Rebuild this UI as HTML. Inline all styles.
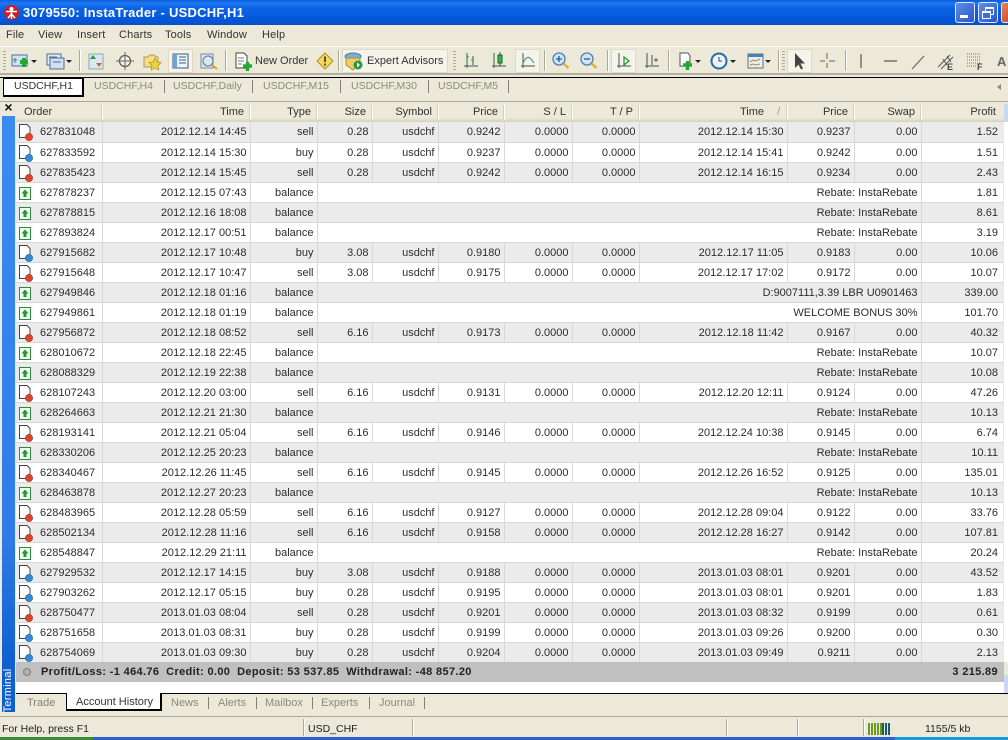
<!DOCTYPE html>
<html><head><meta charset="utf-8"><title>InstaTrader</title>
<style>
*{box-sizing:border-box}
html,body{margin:0;padding:0;width:1008px;height:740px;overflow:hidden;background:#ece9d8;font:11px "Liberation Sans",sans-serif;color:#222}
.a{position:absolute}
#title{left:0;top:0;width:1008px;height:25px;background:linear-gradient(#0a5ad8 0,#1f78f0 3px,#0b63e6 8px,#0558dc 18px,#0650c8 25px)}
#title span{position:absolute;left:23px;top:5px;font:bold 13px "Liberation Sans",sans-serif;color:#fff;letter-spacing:.25px;white-space:nowrap}
.wb{position:absolute;top:2px;width:20px;height:21px;border:1px solid #dfe8fb;border-radius:3px;background:linear-gradient(135deg,#5f8ee8,#2a55c8)}
.mn{position:absolute;top:29px;font-size:11px;letter-spacing:.15px;color:#333}
.tb{position:absolute;white-space:nowrap;font-size:11px;color:#333}
.sep{position:absolute;width:1px;background:#aca899;box-shadow:1px 0 0 #fff}
.pressed{position:absolute;background:#f5f3ea;border:1px solid #dcd9c9}
.htx{position:absolute;top:106px;font-size:11px;color:#333;text-align:right;white-space:nowrap}
.hs{position:absolute;top:105px;height:15px;width:1px;background:#d2cfbe;box-shadow:1px 0 0 #fff}
.tab{position:absolute;font-size:11px;color:#8a8a80;white-space:nowrap}
.ct{font-size:10.5px}
.tick{position:absolute;width:1px;background:#808078}
table{position:absolute;left:16px;top:122px;width:987px;border-collapse:collapse;table-layout:fixed}
td{height:20px;padding:2px 3px 0 0;text-align:right;border-right:1px solid #d8d8d8;border-bottom:1px solid #d8d8d8;font-size:11px;color:#2c2c2c;white-space:nowrap;overflow:hidden;line-height:17px}
tr:nth-child(odd) td{background:#ebebeb}
tr:nth-child(even) td{background:#fff}
td:first-child{text-align:left;padding-left:24px;position:relative}
td:last-child{padding-right:5px;border-right:0}
svg.ic{position:absolute;left:1px;top:1px}
</style></head><body>
<svg width="0" height="0" style="position:absolute"><defs>
<g id="r"><path d="M2.5 1.5H10L13 4.5V14.5H2.5Z" fill="#fff" stroke="#444" stroke-width="1"/><circle cx="12" cy="14" r="3.6" fill="#e0452c" stroke="#9a2a18" stroke-width=".6"/></g>
<g id="b"><path d="M2.5 1.5H10L13 4.5V14.5H2.5Z" fill="#fff" stroke="#444" stroke-width="1"/><circle cx="12" cy="14" r="3.6" fill="#2f8bd8" stroke="#1a5a98" stroke-width=".6"/></g>
<g id="g"><rect x="2.5" y="3.5" width="11" height="12" fill="#f4fbf4" stroke="#2c8a3c"/><path d="M8 5.5L11.5 9.5H9.5V13H6.5V9.5H4.5Z" fill="#1f9a30"/></g>
</defs></svg>

<div class="a" id="title">
<svg class="a" style="left:3px;top:4px" width="17" height="17" viewBox="0 0 17 17"><circle cx="8.500" cy="8.500" r="7.500" fill="#c81f28"/><circle cx="8.500" cy="5" r="2" fill="#fff"/><path d="M3 7.500H14M8.500 7V15M8.500 10L5 14M8.500 10L12 14" stroke="#fff" stroke-width="1.500" fill="none"/></svg>
<span>3079550: InstaTrader - USDCHF,H1</span>
<div class="wb" style="left:955px"><div class="a" style="left:4px;top:12px;width:8px;height:3px;background:#fff"></div></div>
<div class="wb" style="left:978px"><div class="a" style="left:6px;top:4px;width:9px;height:8px;border:1px solid #fff;border-top-width:2px"></div><div class="a" style="left:3px;top:8px;width:9px;height:8px;border:1px solid #fff;border-top-width:2px;background:#3f6cd8"></div></div>
<div class="wb" style="left:1001px;width:20px;background:linear-gradient(135deg,#e8805c,#c8391c)"></div>
</div>

<div class="mn" style="left:6px">File</div><div class="mn" style="left:38px">View</div><div class="mn" style="left:77px">Insert</div><div class="mn" style="left:119px">Charts</div><div class="mn" style="left:165px">Tools</div><div class="mn" style="left:207px">Window</div><div class="mn" style="left:262px">Help</div>

<div class="a" style="left:0;top:46px;width:1008px;height:1px;background:#fff"></div>
<div class="a" style="left:0;top:73px;width:1008px;height:2px;background:#b4b1a2"></div>
<div class="a" style="left:3px;top:51px;width:3px;height:20px;background:repeating-linear-gradient(#aca899 0 1px,transparent 1px 3px)"></div>
<div class="sep" style="left:79px;top:50px;height:21px"></div>
<div class="sep" style="left:225px;top:50px;height:21px"></div>
<div class="sep" style="left:338px;top:50px;height:21px"></div>
<div class="sep" style="left:544px;top:50px;height:21px"></div>
<div class="sep" style="left:607px;top:50px;height:21px"></div>
<div class="sep" style="left:668px;top:50px;height:21px"></div>
<div class="sep" style="left:778px;top:50px;height:21px"></div>
<div class="sep" style="left:845px;top:50px;height:21px"></div>
<div class="a" style="left:453px;top:51px;width:3px;height:20px;background:repeating-linear-gradient(#aca899 0 1px,transparent 1px 3px)"></div>
<div class="a" style="left:782px;top:51px;width:3px;height:20px;background:repeating-linear-gradient(#aca899 0 1px,transparent 1px 3px)"></div>

<div class="pressed" style="left:168px;top:49px;width:25px;height:24px"></div>
<div class="pressed" style="left:342px;top:49px;width:106px;height:24px"></div>
<div class="pressed" style="left:515px;top:49px;width:25px;height:24px"></div>
<div class="pressed" style="left:611px;top:49px;width:25px;height:24px"></div>
<div class="pressed" style="left:787px;top:49px;width:25px;height:24px"></div>

<svg class="a" style="left:0;top:47px" width="1008" height="27" viewBox="0 47 1008 27">
<rect x="12" y="55" width="15" height="11" fill="#cfe2f6" stroke="#50708c"/><path d="M15 58v5M13 60h4" stroke="#50708c"/><path d="M20 62h8M24 58v9" stroke="#24a832" stroke-width="4"/>
<path d="M31 60h6l-3 3z" fill="#222"/>
<rect x="47" y="54" width="14" height="11" fill="#dfe9f5" stroke="#50708c"/><rect x="50" y="58" width="14" height="11" fill="#cfe0f2" stroke="#50708c"/><path d="M49 57h8M53 62h8" stroke="#50708c"/>
<path d="M66 60h6l-3 3z" fill="#222"/>
<rect x="89" y="54" width="14" height="15" fill="#d8e8f5" stroke="#8aa"/><path d="M93 55l3 4h-6z" fill="#2a9a3a"/><path d="M99 67l3-4h-6z" fill="#d8642c"/>
<circle cx="125" cy="61" r="5.500" fill="#f5f0e0" stroke="#555" stroke-width="1.200"/><path d="M125 52v18M116 61h18" stroke="#666"/>
<path d="M144 57h4l2-2h4l2 2h2v10h-14z" fill="#f5dc88" stroke="#b09a50"/><path d="M155 58l2 4 4 .6-3 3 .8 4.400-3.800-2-3.800 2 .8-4.400-3-3 4-.6z" fill="#f2d23c" stroke="#a89020" stroke-width=".7"/>
<rect x="173" y="54" width="15" height="14" fill="#eef4fb" stroke="#3a5a80"/><rect x="173" y="54" width="4" height="14" fill="#6aa4d8"/><path d="M179 57h7M179 60h7M179 63h7" stroke="#3a5a80"/>
<rect x="201" y="54" width="12" height="14" fill="#dbe5f0" stroke="#7a8ca0"/><circle cx="208" cy="61" r="5" fill="#dce8f2" stroke="#607890"/><path d="M212 65l5 4" stroke="#d8a030" stroke-width="2"/>
<path d="M236 53h8l3 3v12h-11z" fill="#fff" stroke="#444"/><path d="M238 58h6M238 61h6M238 64h4" stroke="#777"/><path d="M243 66h9M247.500 62v9" stroke="#24a832" stroke-width="3.500"/>
<path d="M325 53l8 8-8 8-8-8z" fill="#f5d858" stroke="#a89028"/><path d="M325 56.500v5.500M325 63.500v2" stroke="#222" stroke-width="1.500"/>
<ellipse cx="353" cy="56.500" rx="8" ry="3.500" fill="#7ab0d8" stroke="#4a7aa0"/><path d="M346 58h14v6l-7 6-7-5z" fill="#f0cc68" stroke="#a89040"/><circle cx="358" cy="65" r="4.500" fill="#2a9a40"/><path d="M357 62.500l3 2.500-3 2.500z" fill="#fff"/>
<path d="M467 53v15M464 66h14M473 56v9" stroke="#3a5a50" fill="none"/><path d="M467 57h2M473 60h-2" stroke="#2a9a3a"/>
<path d="M494 53v15M492 66h14" stroke="#3a5a50"/><path d="M500 52v14" stroke="#444"/><rect x="498" y="55" width="4" height="8" fill="#30c030" stroke="#254"/>
<path d="M523 53v15M521 66h14" stroke="#3a5a50"/><path d="M523 63c4-9 7-6 11 0" stroke="#3a8a70" fill="none"/>
<circle cx="559" cy="59" r="6" fill="#cfe4f6" stroke="#4a80b0" stroke-width="1.300"/><path d="M556 59h6M559 56v6" stroke="#2a5a90" stroke-width="1.300"/><path d="M563.500 63.500l5 4.500" stroke="#d8b040" stroke-width="2.500"/>
<circle cx="587" cy="59" r="6" fill="#cfe4f6" stroke="#4a80b0" stroke-width="1.300"/><path d="M584 59h6" stroke="#2a5a90" stroke-width="1.300"/><path d="M591.500 63.500l5 4.500" stroke="#d8b040" stroke-width="2.500"/>
<path d="M619 53v15M617 66h14" stroke="#3a5a50"/><path d="M624 57l5 4-5 4z" fill="none" stroke="#2a9a3a" stroke-width="1.300"/>
<path d="M647 53v15M645 66h14M652 55v10" stroke="#3a5a50"/><path d="M654 60h4M656 58v4" stroke="#555"/>
<path d="M680 53h8l2 3v10h-10z" fill="#fff" stroke="#555"/><path d="M683 65h9M687.500 61v9" stroke="#24a832" stroke-width="3.500"/><path d="M695 60h6l-3 3z" fill="#222"/>
<circle cx="719" cy="61" r="7.500" fill="#eaf2fa" stroke="#2a6aa8" stroke-width="2"/><path d="M719 57v4h3" stroke="#444" fill="none"/><path d="M730 60h6l-3 3z" fill="#222"/>
<rect x="748" y="54" width="15" height="14" fill="#e8eef4" stroke="#5a7488"/><rect x="748" y="54" width="15" height="3" fill="#4a80b8"/><path d="M750 62l3-2 3 1 4-2M750 65l3-1 3 1 4-1" stroke="#c08030" fill="none"/><path d="M765 60h6l-3 3z" fill="#222"/>
<path d="M795 53v15l3.500-3.500 2.500 5 2-1-2.500-5h4.500z" fill="#444"/>
<path d="M827 53v15M820 61h15" stroke="#666"/><path d="M827 59v4M825 61h4" stroke="#ece9d8" stroke-width="1.500"/>
<path d="M861 54v14" stroke="#555" stroke-width="1.200"/>
<path d="M884 61h13" stroke="#555" stroke-width="1.200"/>
<path d="M912 69l12-13" stroke="#666" stroke-width="1.200"/>
<path d="M938 67l12-12M941 69l12-12M943 59l4 6M947 56l4 6" stroke="#555" fill="none"/>
<path d="M967 54h14M967 57h14M967 60h14M967 63h14M967 66h10" stroke="#777" stroke-dasharray="1 1"/>
</svg>
<div class="a" style="left:947px;top:62px;font-size:9px;font-weight:bold;color:#444">E</div>
<div class="a" style="left:977px;top:62px;font-size:9px;font-weight:bold;color:#444">F</div>
<div class="a" style="left:997px;top:54px;font-size:13px;font-weight:bold;color:#666">A</div>
<div class="tb" style="left:255px;top:55px">New Order</div>
<div class="tb" style="left:367px;top:55px">Expert Advisors</div>

<div class="a" style="left:0;top:77px;width:1008px;height:1px;background:#000"></div>
<div class="a" style="left:3px;top:77px;width:81px;height:20px;background:#fff;border:1px solid #000;border-top:2px solid #000;border-bottom:2px solid #000;border-right:2px solid #000"></div>
<div class="tab ct" style="left:14px;top:80px;color:#333">USDCHF,H1</div>
<div class="tab ct" style="left:94px;top:80px">USDCHF,H4</div><div class="tick" style="left:164px;top:80px;height:13px"></div>
<div class="tab ct" style="left:173px;top:80px">USDCHF,Daily</div><div class="tick" style="left:252px;top:80px;height:13px"></div>
<div class="tab ct" style="left:263px;top:80px">USDCHF,M15</div><div class="tick" style="left:340px;top:80px;height:13px"></div>
<div class="tab ct" style="left:351px;top:80px">USDCHF,M30</div><div class="tick" style="left:428px;top:80px;height:13px"></div>
<div class="tab ct" style="left:438px;top:80px">USDCHF,M5</div><div class="tick" style="left:508px;top:80px;height:13px"></div>
<div class="a" style="left:997px;top:84px;width:0;height:0;border:3px solid transparent;border-right:4px solid #888;border-left:0"></div>
<div class="a" style="left:0;top:101px;width:1008px;height:1px;background:#aca899"></div>

<div class="a" style="left:2px;top:116px;width:13px;height:596px;background:linear-gradient(#3b8bf0 0,#2f7ce8 70%,#0f5fd0 92%,#0f5fd0 100%)"></div>
<div class="a" style="left:2px;top:102px;width:13px;height:14px;background:#ece9d8;font:bold 14px 'Liberation Sans',sans-serif;text-align:center;line-height:11px;color:#111">×</div>
<div class="a" style="left:-15px;top:684px;width:47px;height:13px;transform:rotate(-90deg);font-size:11px;line-height:13px;color:#fff;text-align:center;letter-spacing:.3px">Terminal</div>

<div class="a" style="left:16px;top:102px;width:992px;height:20px;background:linear-gradient(#ece9d8 0,#ece9d8 16px,#d8d5c6 19px)"></div>
<div class="htx" style="left:24px">Order</div>
<div class="htx" style="right:764px">Time</div>
<div class="htx" style="right:697px">Type</div>
<div class="htx" style="right:642px">Size</div>
<div class="htx" style="right:576px">Symbol</div>
<div class="htx" style="right:510px">Price</div>
<div class="htx" style="right:442px">S / L</div>
<div class="htx" style="right:375px">T / P</div>
<div class="htx" style="right:244px">Time</div>
<div class="a" style="left:777px;top:106px;font-size:11px;color:#999">/</div>
<div class="htx" style="right:160px">Price</div>
<div class="htx" style="right:93px">Swap</div>
<div class="htx" style="right:12px">Profit</div>
<div class="hs" style="left:101px"></div><div class="hs" style="left:249px"></div><div class="hs" style="left:316px"></div><div class="hs" style="left:371px"></div><div class="hs" style="left:437px"></div><div class="hs" style="left:503px"></div><div class="hs" style="left:571px"></div><div class="hs" style="left:638px"></div><div class="hs" style="left:786px"></div><div class="hs" style="left:853px"></div><div class="hs" style="left:920px"></div>
<div class="a" style="left:1004px;top:104px;width:4px;height:17px;background:#c8d8f4"></div>
<div class="a" style="left:1004px;top:122px;width:4px;height:540px;background:#fff"></div>

<table>
<colgroup><col style="width:86px"><col style="width:148px"><col style="width:67px"><col style="width:55px"><col style="width:66px"><col style="width:66px"><col style="width:68px"><col style="width:67px"><col style="width:148px"><col style="width:67px"><col style="width:67px"><col style="width:82px"></colgroup>
<tbody>
<tr><td><svg class="ic" width="18" height="18"><use href="#r"/></svg>627831048</td><td>2012.12.14 14:45</td><td>sell</td><td>0.28</td><td>usdchf</td><td>0.9242</td><td>0.0000</td><td>0.0000</td><td>2012.12.14 15:30</td><td>0.9237</td><td>0.00</td><td>1.52</td></tr>
<tr><td><svg class="ic" width="18" height="18"><use href="#b"/></svg>627833592</td><td>2012.12.14 15:30</td><td>buy</td><td>0.28</td><td>usdchf</td><td>0.9237</td><td>0.0000</td><td>0.0000</td><td>2012.12.14 15:41</td><td>0.9242</td><td>0.00</td><td>1.51</td></tr>
<tr><td><svg class="ic" width="18" height="18"><use href="#r"/></svg>627835423</td><td>2012.12.14 15:45</td><td>sell</td><td>0.28</td><td>usdchf</td><td>0.9242</td><td>0.0000</td><td>0.0000</td><td>2012.12.14 16:15</td><td>0.9234</td><td>0.00</td><td>2.43</td></tr>
<tr><td><svg class="ic" width="18" height="18"><use href="#g"/></svg>627878237</td><td>2012.12.15 07:43</td><td>balance</td><td colspan="8">Rebate: InstaRebate</td><td>1.81</td></tr>
<tr><td><svg class="ic" width="18" height="18"><use href="#g"/></svg>627878815</td><td>2012.12.16 18:08</td><td>balance</td><td colspan="8">Rebate: InstaRebate</td><td>8.61</td></tr>
<tr><td><svg class="ic" width="18" height="18"><use href="#g"/></svg>627893824</td><td>2012.12.17 00:51</td><td>balance</td><td colspan="8">Rebate: InstaRebate</td><td>3.19</td></tr>
<tr><td><svg class="ic" width="18" height="18"><use href="#b"/></svg>627915682</td><td>2012.12.17 10:48</td><td>buy</td><td>3.08</td><td>usdchf</td><td>0.9180</td><td>0.0000</td><td>0.0000</td><td>2012.12.17 11:05</td><td>0.9183</td><td>0.00</td><td>10.06</td></tr>
<tr><td><svg class="ic" width="18" height="18"><use href="#r"/></svg>627915648</td><td>2012.12.17 10:47</td><td>sell</td><td>3.08</td><td>usdchf</td><td>0.9175</td><td>0.0000</td><td>0.0000</td><td>2012.12.17 17:02</td><td>0.9172</td><td>0.00</td><td>10.07</td></tr>
<tr><td><svg class="ic" width="18" height="18"><use href="#g"/></svg>627949846</td><td>2012.12.18 01:16</td><td>balance</td><td colspan="8">D:9007111,3.39 LBR U0901463</td><td>339.00</td></tr>
<tr><td><svg class="ic" width="18" height="18"><use href="#g"/></svg>627949861</td><td>2012.12.18 01:19</td><td>balance</td><td colspan="8">WELCOME BONUS 30%</td><td>101.70</td></tr>
<tr><td><svg class="ic" width="18" height="18"><use href="#r"/></svg>627956872</td><td>2012.12.18 08:52</td><td>sell</td><td>6.16</td><td>usdchf</td><td>0.9173</td><td>0.0000</td><td>0.0000</td><td>2012.12.18 11:42</td><td>0.9167</td><td>0.00</td><td>40.32</td></tr>
<tr><td><svg class="ic" width="18" height="18"><use href="#g"/></svg>628010672</td><td>2012.12.18 22:45</td><td>balance</td><td colspan="8">Rebate: InstaRebate</td><td>10.07</td></tr>
<tr><td><svg class="ic" width="18" height="18"><use href="#g"/></svg>628088329</td><td>2012.12.19 22:38</td><td>balance</td><td colspan="8">Rebate: InstaRebate</td><td>10.08</td></tr>
<tr><td><svg class="ic" width="18" height="18"><use href="#r"/></svg>628107243</td><td>2012.12.20 03:00</td><td>sell</td><td>6.16</td><td>usdchf</td><td>0.9131</td><td>0.0000</td><td>0.0000</td><td>2012.12.20 12:11</td><td>0.9124</td><td>0.00</td><td>47.26</td></tr>
<tr><td><svg class="ic" width="18" height="18"><use href="#g"/></svg>628264663</td><td>2012.12.21 21:30</td><td>balance</td><td colspan="8">Rebate: InstaRebate</td><td>10.13</td></tr>
<tr><td><svg class="ic" width="18" height="18"><use href="#r"/></svg>628193141</td><td>2012.12.21 05:04</td><td>sell</td><td>6.16</td><td>usdchf</td><td>0.9146</td><td>0.0000</td><td>0.0000</td><td>2012.12.24 10:38</td><td>0.9145</td><td>0.00</td><td>6.74</td></tr>
<tr><td><svg class="ic" width="18" height="18"><use href="#g"/></svg>628330206</td><td>2012.12.25 20:23</td><td>balance</td><td colspan="8">Rebate: InstaRebate</td><td>10.11</td></tr>
<tr><td><svg class="ic" width="18" height="18"><use href="#r"/></svg>628340467</td><td>2012.12.26 11:45</td><td>sell</td><td>6.16</td><td>usdchf</td><td>0.9145</td><td>0.0000</td><td>0.0000</td><td>2012.12.26 16:52</td><td>0.9125</td><td>0.00</td><td>135.01</td></tr>
<tr><td><svg class="ic" width="18" height="18"><use href="#g"/></svg>628463878</td><td>2012.12.27 20:23</td><td>balance</td><td colspan="8">Rebate: InstaRebate</td><td>10.13</td></tr>
<tr><td><svg class="ic" width="18" height="18"><use href="#r"/></svg>628483965</td><td>2012.12.28 05:59</td><td>sell</td><td>6.16</td><td>usdchf</td><td>0.9127</td><td>0.0000</td><td>0.0000</td><td>2012.12.28 09:04</td><td>0.9122</td><td>0.00</td><td>33.76</td></tr>
<tr><td><svg class="ic" width="18" height="18"><use href="#r"/></svg>628502134</td><td>2012.12.28 11:16</td><td>sell</td><td>6.16</td><td>usdchf</td><td>0.9158</td><td>0.0000</td><td>0.0000</td><td>2012.12.28 16:27</td><td>0.9142</td><td>0.00</td><td>107.81</td></tr>
<tr><td><svg class="ic" width="18" height="18"><use href="#g"/></svg>628548847</td><td>2012.12.29 21:11</td><td>balance</td><td colspan="8">Rebate: InstaRebate</td><td>20.24</td></tr>
<tr><td><svg class="ic" width="18" height="18"><use href="#b"/></svg>627929532</td><td>2012.12.17 14:15</td><td>buy</td><td>3.08</td><td>usdchf</td><td>0.9188</td><td>0.0000</td><td>0.0000</td><td>2013.01.03 08:01</td><td>0.9201</td><td>0.00</td><td>43.52</td></tr>
<tr><td><svg class="ic" width="18" height="18"><use href="#b"/></svg>627903262</td><td>2012.12.17 05:15</td><td>buy</td><td>0.28</td><td>usdchf</td><td>0.9195</td><td>0.0000</td><td>0.0000</td><td>2013.01.03 08:01</td><td>0.9201</td><td>0.00</td><td>1.83</td></tr>
<tr><td><svg class="ic" width="18" height="18"><use href="#r"/></svg>628750477</td><td>2013.01.03 08:04</td><td>sell</td><td>0.28</td><td>usdchf</td><td>0.9201</td><td>0.0000</td><td>0.0000</td><td>2013.01.03 08:32</td><td>0.9199</td><td>0.00</td><td>0.61</td></tr>
<tr><td><svg class="ic" width="18" height="18"><use href="#b"/></svg>628751658</td><td>2013.01.03 08:31</td><td>buy</td><td>0.28</td><td>usdchf</td><td>0.9199</td><td>0.0000</td><td>0.0000</td><td>2013.01.03 09:26</td><td>0.9200</td><td>0.00</td><td>0.30</td></tr>
<tr><td><svg class="ic" width="18" height="18"><use href="#b"/></svg>628754069</td><td>2013.01.03 09:30</td><td>buy</td><td>0.28</td><td>usdchf</td><td>0.9204</td><td>0.0000</td><td>0.0000</td><td>2013.01.03 09:49</td><td>0.9211</td><td>0.00</td><td>2.13</td></tr>
</tbody></table>

<div class="a" style="left:16px;top:662px;width:988px;height:20px;background:#c0c0c0"></div>
<div class="a" style="left:23px;top:668px;width:8px;height:8px;border-radius:50%;border:1px solid #808080;background:#b0b0b0"></div>
<div class="a" style="left:41px;top:666px;font:bold 11px 'Liberation Sans',sans-serif;color:#222;white-space:pre;letter-spacing:.35px">Profit/Loss: -1 464.76  Credit: 0.00  Deposit: 53 537.85  Withdrawal: -48 857.20</div>
<div class="a" style="right:10px;top:666px;font:bold 11px 'Liberation Sans',sans-serif;color:#222;letter-spacing:.35px">3 215.89</div>
<div class="a" style="left:16px;top:682px;width:992px;height:11px;background:#fff"></div>
<div class="a" style="left:1004px;top:675px;width:4px;height:18px;background:#c8d8f4"></div>

<div class="a" style="left:16px;top:693px;width:992px;height:1px;background:#000"></div>
<div class="a" style="left:66px;top:693px;width:96px;height:18px;background:#fff;border:1px solid #000;border-top:0;border-bottom:2px solid #000;border-right:2px solid #000"></div>
<div class="tab" style="left:27px;top:697px;color:#808078">Trade</div>
<div class="tab" style="left:76px;top:696px;color:#333">Account History</div>
<div class="tab" style="left:171px;top:697px">News</div><div class="tick" style="left:208px;top:697px;height:12px"></div>
<div class="tab" style="left:218px;top:697px">Alerts</div><div class="tick" style="left:256px;top:697px;height:12px"></div>
<div class="tab" style="left:265px;top:697px">Mailbox</div><div class="tick" style="left:312px;top:697px;height:12px"></div>
<div class="tab" style="left:321px;top:697px">Experts</div><div class="tick" style="left:369px;top:697px;height:12px"></div>
<div class="tab" style="left:379px;top:697px">Journal</div><div class="tick" style="left:424px;top:697px;height:12px"></div>
<div class="a" style="left:0;top:716px;width:1008px;height:1px;background:#aca899"></div>

<div class="a" style="left:2px;top:723px;font-size:10.5px;color:#222">For Help, press F1</div>
<div class="a" style="left:308px;top:723px;font-size:10.5px;color:#222">USD_CHF</div>
<div class="a" style="left:925px;top:723px;font-size:10.5px;color:#222">1155/5 kb</div>
<div class="sep" style="left:303px;top:719px;height:17px"></div>
<div class="sep" style="left:412px;top:719px;height:17px"></div>
<div class="sep" style="left:726px;top:719px;height:17px"></div>
<div class="sep" style="left:797px;top:719px;height:17px"></div>
<div class="sep" style="left:863px;top:719px;height:17px"></div>
<div class="a" style="left:868px;top:723px;width:14px;height:12px;background:repeating-linear-gradient(90deg,#6a9a20 0 2px,#ece9d8 2px 3px)"></div>
<div class="a" style="left:882px;top:723px;width:9px;height:12px;background:repeating-linear-gradient(90deg,#1a5a6a 0 2px,#ece9d8 2px 3px)"></div>
<div class="a" style="left:0;top:737px;width:1008px;height:3px;background:#2a62d0"></div>
<div class="a" style="left:0;top:737px;width:93px;height:3px;background:#3c8a3c"></div>
<div class="a" style="left:895px;top:737px;width:113px;height:3px;background:#1a98e0"></div>
</body></html>
